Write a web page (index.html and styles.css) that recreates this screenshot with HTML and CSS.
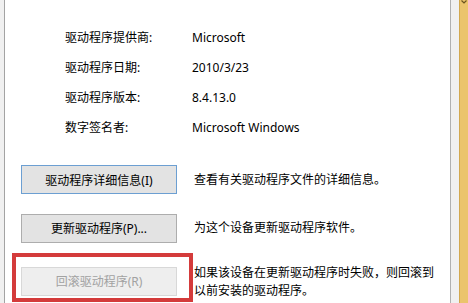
FILE: index.html
```html
<!DOCTYPE html>
<html lang="zh-CN">

<head>
    <meta charset="UTF-8">
    <meta name="viewport" content="width=device-width, initial-scale=1.0">
    <title>驱动程序</title>
    <link rel="stylesheet" href="styles.css">
</head>

<body>
    <div class="window">
        <div class="edge_left"></div>
        <div class="panel">
            <div class="info">
                <span class="label">驱动程序提供商:</span>
                <span class="value">Microsoft</span>
                <span class="label">驱动程序日期:</span>
                <span class="value">2010/3/23</span>
                <span class="label">驱动程序版本:</span>
                <span class="value">8.4.13.0</span>
                <span class="label">数字签名者:</span>
                <span class="value">Microsoft Windows</span>
            </div>
            <div class="actions">
                <div class="action">
                    <button class="btn default">驱动程序详细信息(I)</button>
                    <p class="desc">查看有关驱动程序文件的详细信息。</p>
                </div>
                <div class="action">
                    <button class="btn">更新驱动程序(P)...</button>
                    <p class="desc">为这个设备更新驱动程序软件。</p>
                </div>
                <div class="action marked">
                    <button class="btn" disabled>回滚驱动程序(R)</button>
                    <p class="desc">如果该设备在更新驱动程序时失败，则回滚到以前安装的驱动程序。</p>
                    <span class="highlight"></span>
                </div>
            </div>
        </div>
        <div class="edge_right"></div>
        <div class="frame">
            <svg width="6" height="4" viewBox="0 0 6 4">
                <path d="M0.5 0.5 L3 3 L5.5 0.5" fill="none" stroke="#6b5420" stroke-width="1.2" />
            </svg>
        </div>
    </div>
</body>

</html>
```

FILE: styles.css
```css
* {
    box-sizing: border-box;
}

body {
    margin: 0;
    font-family: "Noto Sans", "Noto Sans CJK SC", sans-serif;
    font-size: 12px;
    color: #000;
}

.window {
    display: flex;
    width: 468px;
    height: 303px;
    overflow: hidden;
}

.edge_left {
    width: 5px;
    background: #f0f0f0;
    border-right: 1px solid #a3a3a3;
}

.panel {
    width: 445px;
    background: #fff;
    padding-top: 22px;
}

.info {
    display: grid;
    grid-template-columns: 127px auto;
    grid-auto-rows: 30px;
    align-items: center;
    padding-left: 60px;
}

.actions {
    display: flex;
    flex-direction: column;
    gap: 19.5px;
    margin-top: 23px;
    padding-left: 16px;
}

.action {
    position: relative;
    display: flex;
    align-items: center;
    gap: 17px;
}

.btn {
    flex: none;
    width: 156px;
    height: 29px;
    padding: 0;
    font-family: inherit;
    font-size: 12px;
    color: #000;
    background: #e3e3e3;
    border: 1px solid #adadad;
}

.btn.default {
    border-color: #6c9fd2;
}

.btn:disabled {
    color: #a2a2a2;
    background: #eeeeee;
    border-color: #d8d8d8;
}

.desc {
    margin: 0;
    max-width: 246px;
    line-height: 18px;
}

.marked .desc {
    margin-top: 2px;
}

.highlight {
    position: absolute;
    left: -9px;
    top: -9px;
    width: 181px;
    height: 49px;
    border: 4px solid #d43b3b;
}

.edge_right {
    width: 9px;
    background: #f0f0f0;
    border-left: 1px solid #b0b0b0;
}

.frame {
    display: flex;
    justify-content: center;
    width: 9px;
    background: #ebc46c;
    border-left: 1px solid #d2a850;
}

.frame svg {
    display: block;
}
```
